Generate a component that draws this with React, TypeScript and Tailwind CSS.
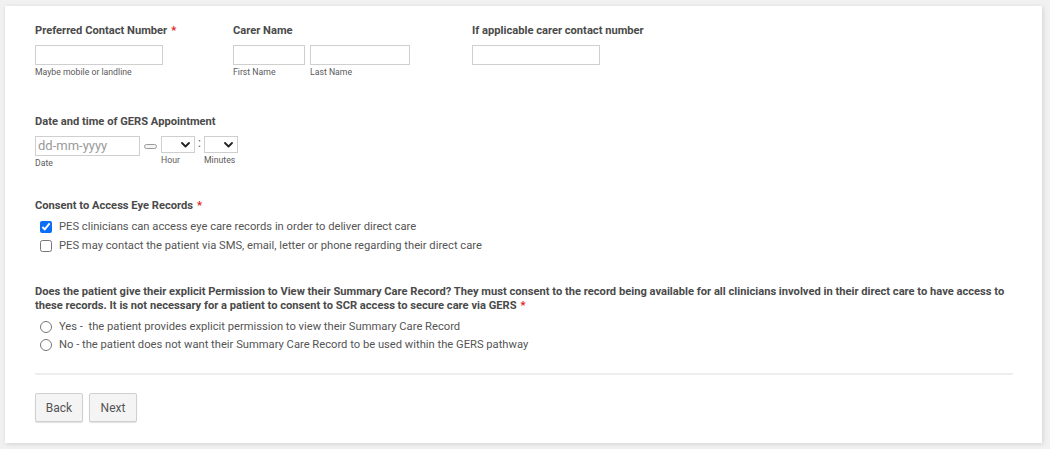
import React from 'react';

const Req = () => <span className="text-[#e02020] ml-[4px]">*</span>

const Label = ({ children, req }: { children: React.ReactNode; req?: boolean }) => (
    <div className="text-[11.15px] leading-[16px] font-bold text-[#4a4a4a]">
        {children}{req ? <Req /> : null}
    </div>
)

const Help = ({ children }: { children: React.ReactNode }) => (
    <div className="text-[8.7px] leading-[12px] text-[#5a5a5a] mt-[1px]">{children}</div>
)

const Box = ({ w }: { w: string }) => (
    <div className={`h-[20px] border border-[#cfcfcf] bg-white ${w}`} />
)

const Chevron = () => (
    <svg width="9" height="6" viewBox="0 0 9 6" fill="none" stroke="#222" strokeWidth="1.8" strokeLinecap="round" strokeLinejoin="round">
        <path d="M1 1l3.5 3.5L8 1" />
    </svg>
)

const Select = () => (
    <div className="w-[34px] h-[17px] border border-[#cfcfcf] bg-white flex items-center justify-end pr-[4px]">
        <Chevron />
    </div>
)

export default function App() {
    return (
        <div className="w-[1050px] h-[449px] bg-[#f1f1f1] pt-[6px] pl-[5px]" style={{ fontFamily: 'Roboto, "Liberation Sans", sans-serif' }}>
            <div className="w-[1037px] h-[437px] bg-white shadow-[1px_1px_5px_rgba(0,0,0,0.13)] pl-[30px] pr-[29px] pt-[17px]">
                {/* contact row */}
                <div className="flex">
                    <div className="w-[198px]">
                        <Label req>Preferred Contact Number</Label>
                        <div className="mt-[6px]"><Box w="w-[128px]" /></div>
                        <Help>Maybe mobile or landline</Help>
                    </div>
                    <div className="w-[239px]">
                        <Label>Carer Name</Label>
                        <div className="mt-[6px] flex gap-[5px]">
                            <div>
                                <Box w="w-[72px]" />
                                <Help>First Name</Help>
                            </div>
                            <div>
                                <Box w="w-[100px]" />
                                <Help>Last Name</Help>
                            </div>
                        </div>
                    </div>
                    <div>
                        <Label>If applicable carer contact number</Label>
                        <div className="mt-[6px]"><Box w="w-[128px]" /></div>
                    </div>
                </div>

                {/* appointment */}
                <div className="mt-[36px]">
                    <Label>Date and time of GERS Appointment</Label>
                    <div className="flex mt-[6px]">
                        <div>
                            <div className="w-[105px] h-[20px] border border-[#cfcfcf] text-[13px] leading-[18px] text-[#9a9a9a] pl-[2px]">dd-mm-yyyy</div>
                            <Help>Date</Help>
                        </div>
                        <div className="w-[13px] h-[5px] border border-[#9a9a9a] rounded-full bg-[#f4f4f4] mt-[8px] ml-[4px] mr-[4px]" />
                        <div>
                            <Select />
                            <div className="text-[8.7px] leading-[12px] text-[#5a5a5a] mt-[1px]">Hour</div>
                        </div>
                        <div className="text-[12px] leading-[14px] text-[#555] w-[9px] text-center">:</div>
                        <div>
                            <Select />
                            <div className="text-[8.7px] leading-[12px] text-[#5a5a5a] mt-[1px]">Minutes</div>
                        </div>
                    </div>
                </div>

                {/* consent */}
                <div className="mt-[29px]">
                    <Label req>Consent to Access Eye Records</Label>
                    <div className="mt-[3px] pl-[5px] text-[11.2px] leading-[19px] text-[#555]">
                        <label className="flex items-center gap-[7px]">
                            <input type="checkbox" defaultChecked className="m-0 w-[12px] h-[12px] accent-[#0b6ef6]" />
                            PES clinicians can access eye care records in order to deliver direct care
                        </label>
                        <label className="flex items-center gap-[7px]">
                            <input type="checkbox" className="m-0 w-[12px] h-[12px]" />
                            PES may contact the patient via SMS, email, letter or phone regarding their direct care
                        </label>
                    </div>
                </div>

                {/* scr */}
                <div className="mt-[30px]">
                    <div className="text-[11.15px] leading-[14px] font-bold text-[#4a4a4a]">
                        Does the patient give their explicit Permission to View their Summary Care Record? They must consent to the record being available for all clinicians involved in their direct care to have access to these records. It is not necessary for a patient to consent to SCR access to secure care via GERS<Req />
                    </div>
                    <div className="mt-[5px] pl-[5px] text-[11.2px] leading-[18px] text-[#555]">
                        <label className="flex items-center gap-[7px]">
                            <input type="radio" name="scr" className="m-0 w-[12px] h-[12px]" />
                            Yes -&nbsp; the patient provides explicit permission to view their Summary Care Record
                        </label>
                        <label className="flex items-center gap-[7px]">
                            <input type="radio" name="scr" className="m-0 w-[12px] h-[12px]" />
                            No - the patient does not want their Summary Care Record to be used within the GERS pathway
                        </label>
                    </div>
                </div>

                <div className="mt-[19px] h-[2px] bg-[#eeeeee]" />

                <div className="flex gap-[6px] mt-[18px]">
                    <button className="w-[48px] h-[29px] border border-[#d0d0d0] bg-[#f4f4f4] rounded-[2px] shadow-[0_1px_1px_rgba(0,0,0,0.12)] text-[12px] text-[#555]">Back</button>
                    <button className="w-[48px] h-[29px] border border-[#d0d0d0] bg-[#f4f4f4] rounded-[2px] shadow-[0_1px_1px_rgba(0,0,0,0.12)] text-[12px] text-[#555]">Next</button>
                </div>
            </div>
        </div>
    )
}
